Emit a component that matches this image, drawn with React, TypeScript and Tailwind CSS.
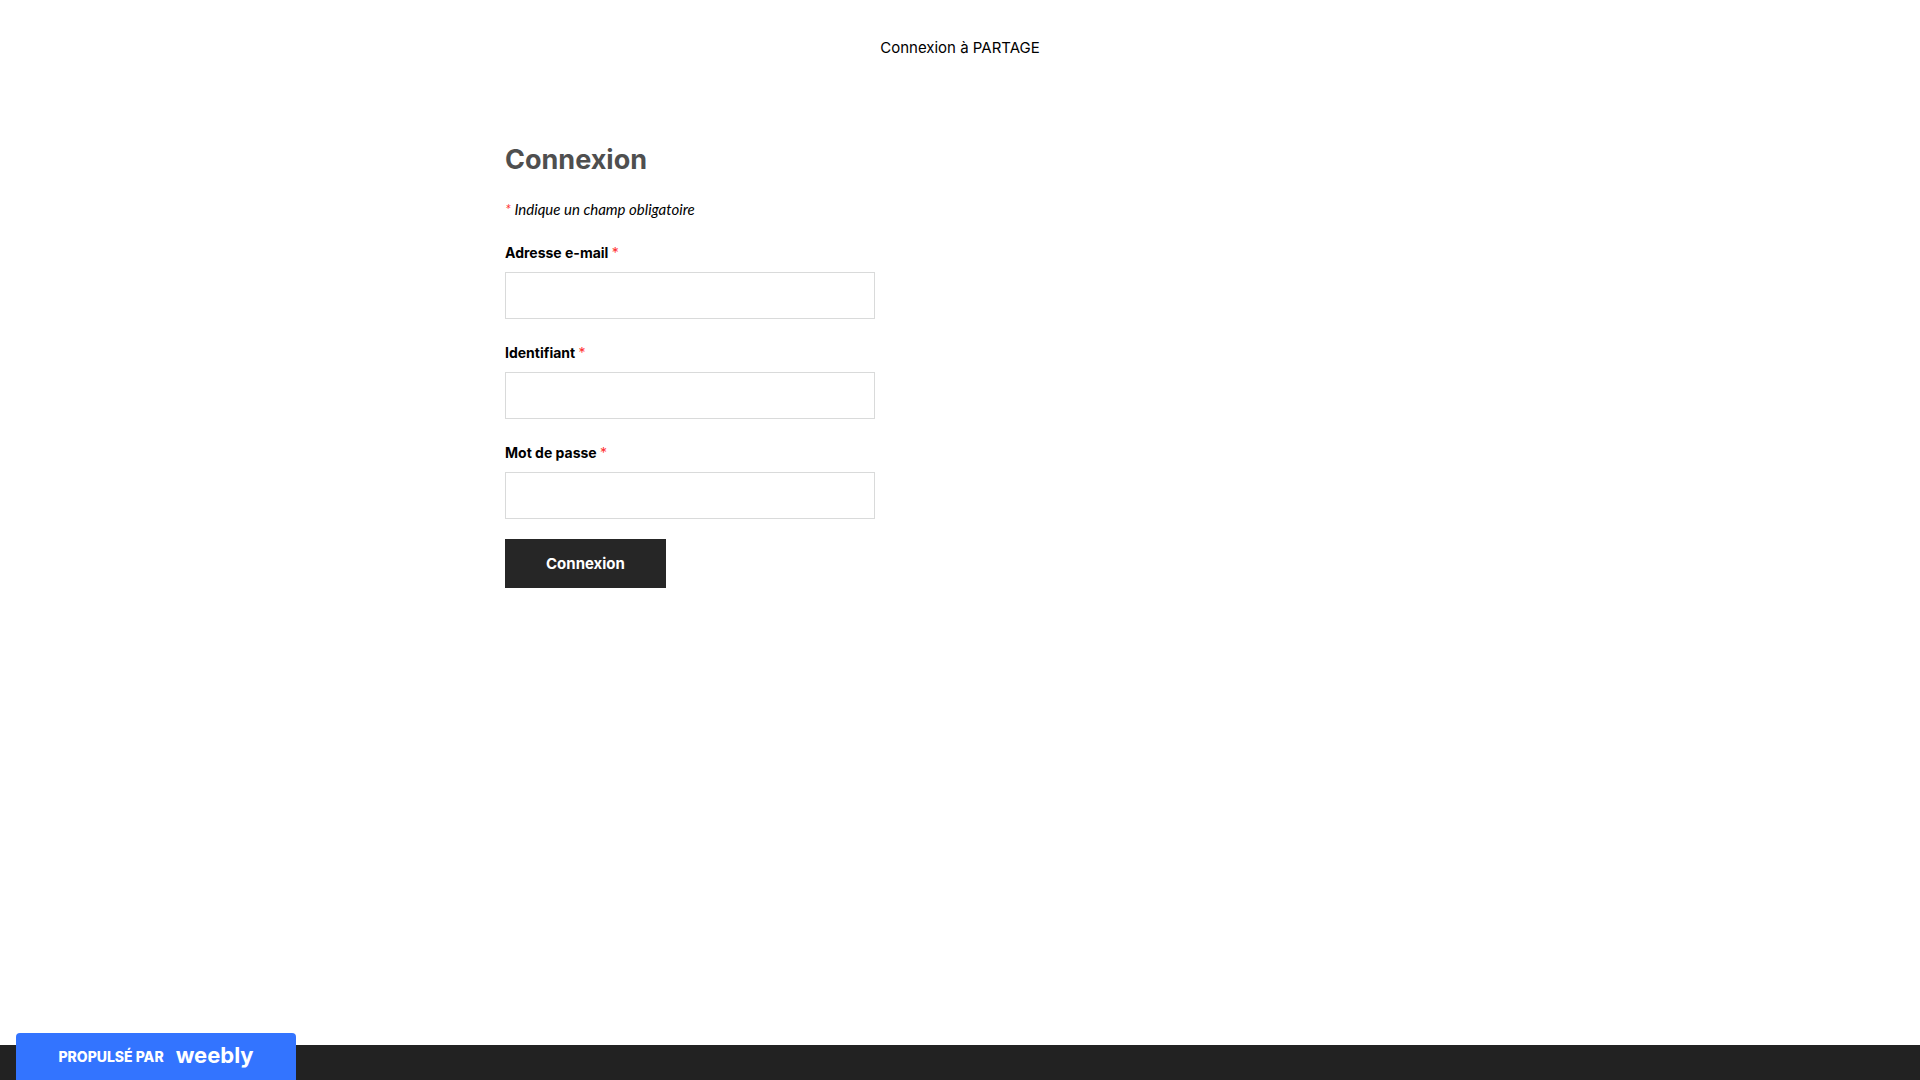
import { useState } from 'react';

const fields = [
  { id: 'email', label: 'Adresse e-mail', type: 'email' },
  { id: 'username', label: 'Identifiant', type: 'text' },
  { id: 'password', label: 'Mot de passe', type: 'password' },
];

export default function App() {
  const [values, setValues] = useState<Record<string, string>>({});

  const handleSubmit = (e: React.FormEvent) => {
    e.preventDefault();
  };

  return (
    <div className="min-h-screen flex flex-col bg-white text-black font-['Inter','Liberation_Sans',sans-serif]">
      <header className="pt-[35px] pb-9 text-center">
        <a href="#" className="text-[15px] leading-6">Connexion à PARTAGE</a>
      </header>

      <main className="flex-1 w-full max-w-[910px] mx-auto pt-11">
        <h1 className="text-[27px] leading-10 font-bold text-[#4f4f4f]">Connexion</h1>

        <form onSubmit={handleSubmit} className="mt-[19px]" noValidate>
          <p className="font-['Lato',sans-serif] text-[15px] leading-5 italic">
            <span className="text-[#ff3131]">*</span> Indique un champ obligatoire
          </p>

          {fields.map((field) => (
            <div key={field.id} className="mt-[22px] flex flex-col items-start">
              <label htmlFor={field.id} className="text-sm leading-6 font-bold mb-[7px]">
                {field.label} <span className="font-normal text-[#ff3131]">*</span>
              </label>
              <input
                id={field.id}
                type={field.type}
                value={values[field.id] ?? ''}
                onChange={(e) => setValues({ ...values, [field.id]: e.target.value })}
                className="w-full max-w-[370px] h-[47px] px-3 border border-[#d9dada] focus:outline-none focus:border-gray-500"
                required
              />
            </div>
          ))}

          <button type="submit" className="mt-5 px-[41px] py-3 bg-[#262626] text-white text-[15px] leading-[25px] font-bold">
            Connexion
          </button>
        </form>
      </main>

      <footer className="h-[35px] bg-[#222222]" />

      {/* Weebly badge, stays over the footer */}
      <a
        href="#"
        className="fixed bottom-0 left-4 w-[280px] h-[47px] flex items-center justify-center gap-3 rounded-t bg-[#3374ff] text-white"
      >
        <span className="text-sm leading-5 font-extrabold">PROPULSÉ PAR</span>
        <span className="text-[22px] leading-6 pb-1 font-bold">weebly</span>
      </a>
    </div>
  );
}
